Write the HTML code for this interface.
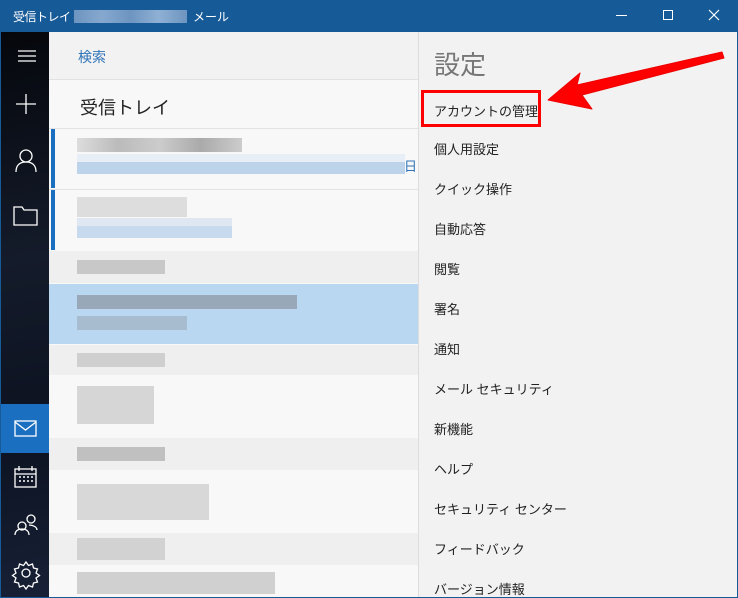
<!DOCTYPE html>
<html><head><meta charset="utf-8"><style>
*{margin:0;padding:0;box-sizing:border-box}
html,body{width:738px;height:598px;overflow:hidden}
body{font-family:"Liberation Sans","Noto Sans CJK JP",sans-serif;background:#fff;position:relative}
.a{position:absolute}
.px{position:absolute;height:14px}
</style></head><body>
<div class="a" style="left:0;top:0;width:738px;height:32px;background:#175a98"></div>
<div class="a" style="left:13px;top:8px;color:#fff;font-size:12px;letter-spacing:-0.5px">受信トレイ -</div>
<div class="a" style="left:74px;top:10px;width:113px;height:13px;background:linear-gradient(90deg,#6d95c0,#86a8cf,#6d95c0,#8fb0d4,#6d95c0)"></div>
<div class="a" style="left:193px;top:8px;color:#fff;font-size:12px">メール</div>
<div class="a" style="left:616px;top:15px;width:11px;height:1px;background:#fff"></div>
<div class="a" style="left:663px;top:10px;width:10px;height:10px;border:1px solid #fff"></div>
<svg class="a" style="left:708px;top:9px" width="12" height="12"><path d="M1 1L11 11M11 1L1 11" stroke="#fff" stroke-width="1.2"/></svg>
<div class="a" style="left:0;top:32px;width:1px;height:566px;background:#175a98"></div>
<div class="a" style="left:737px;top:32px;width:1px;height:566px;background:#175a98"></div>
<!-- sidebar -->
<div class="a" style="left:1px;top:32px;width:48px;height:566px;background:linear-gradient(170deg,#05070c,#141b2a 40%,#0c1220 70%,#172036)"></div>
<svg class="a" style="left:1px;top:32px" width="48" height="565" fill="none" stroke="#fff" stroke-width="1.3">
<path d="M17 19h18M17 24h18M17 29h18"/>
<path d="M25 62v20M15 72h20"/>
<circle cx="25" cy="124" r="6"/><path d="M15 140c0-7 4-10 10-10s10 3 10 10"/>
<path d="M13 175h8l2 3h13v15H13z"/>
</svg>
<div class="a" style="left:1px;top:404px;width:48px;height:49px;background:#1a6fc0"></div>
<svg class="a" style="left:1px;top:380px" width="48" height="217" fill="none" stroke="#fff" stroke-width="1.3">
<rect x="14" y="41" width="21" height="15"/><path d="M14 42l10.5 8 10.5-8"/>
<rect x="14" y="89" width="21" height="18"/><path d="M14 94h21M18 86v5M31 86v5"/>
<path d="M18 97h2M22 97h2M26 97h2M30 97h2M18 101h2M22 101h2M26 101h2M30 101h2" stroke-width="1.5"/>
<circle cx="21" cy="146" r="4"/><path d="M14 155c0-4 3-6 7-6s7 2 7 6"/>
<circle cx="30" cy="139" r="4"/><path d="M28 145c4 0 8 2 8 5"/>
<circle cx="25" cy="193" r="4"/>
<path d="M25 182l2.5 3.5 4-1.5 1 4 4 1-1.5 4 3.5 2.5-3.5 2.5 1.5 4-4 1-1 4-4-1.5-2.5 3.5-2.5-3.5-4 1.5-1-4-4-1 1.5-4-3.5-2.5 3.5-2.5-1.5-4 4-1 1-4 4 1.5z"/>
</svg>
<!-- list -->
<div class="a" style="left:49px;top:32px;width:369px;height:566px;background:#f8f8f8"></div>
<div class="a" style="left:49px;top:32px;width:369px;height:48px;background:#f2f2f2;border-bottom:1px solid #e2e2e2"></div>
<div class="a" style="left:78px;top:47px;color:#2e73b8;font-size:14px">検索</div>
<div class="a" style="left:80px;top:94px;color:#222;font-size:18px">受信トレイ</div>
<div class="a" style="left:49px;top:128px;width:369px;height:1px;background:#e2e2e2"></div>
<div class="a" style="left:51px;top:129px;width:4px;height:59px;background:#1a6fc0"></div>
<div class="px" style="left:77px;top:138px;width:165px;background:linear-gradient(90deg,#ddd,#bbb,#ccc,#aaa,#ccc)"></div>
<div class="px" style="left:77px;top:154px;width:328px;height:20px;background:linear-gradient(180deg,#e8eef6 40%,#bcd3ea 40%)"></div>
<div class="a" style="left:404px;top:156px;color:#2e73b8;font-size:13px">日</div>
<div class="a" style="left:49px;top:189px;width:369px;height:1px;background:#e2e2e2"></div>
<div class="a" style="left:51px;top:190px;width:4px;height:60px;background:#1a6fc0"></div>
<div class="px" style="left:77px;top:197px;width:110px;height:20px;background:#ddd"></div>
<div class="px" style="left:77px;top:218px;width:155px;height:20px;background:linear-gradient(180deg,#dfe8f2 40%,#c8daee 40%)"></div>
<div class="a" style="left:49px;top:251px;width:369px;height:32px;background:#efefef"></div>
<div class="px" style="left:77px;top:260px;width:88px;background:#c8c8c8"></div>
<div class="a" style="left:49px;top:284px;width:369px;height:60px;background:#b9d7f1"></div>
<div class="px" style="left:77px;top:295px;width:220px;background:#98a8b8"></div>
<div class="px" style="left:77px;top:316px;width:110px;background:#a8bcd0"></div>
<div class="a" style="left:49px;top:345px;width:369px;height:30px;background:#efefef"></div>
<div class="px" style="left:77px;top:353px;width:88px;background:#cfcfcf"></div>
<div class="px" style="left:77px;top:386px;width:77px;height:38px;background:#d6d6d6"></div>
<div class="a" style="left:49px;top:438px;width:369px;height:32px;background:#efefef"></div>
<div class="px" style="left:77px;top:447px;width:88px;background:#c0c0c0"></div>
<div class="px" style="left:77px;top:484px;width:132px;height:36px;background:#d8d8d8"></div>
<div class="a" style="left:49px;top:533px;width:369px;height:32px;background:#efefef"></div>
<div class="px" style="left:77px;top:538px;width:88px;height:22px;background:#d2d2d2"></div>
<div class="px" style="left:77px;top:572px;width:198px;height:22px;background:#d0d0d0"></div>
<!-- settings -->
<div class="a" style="left:418px;top:32px;width:319px;height:566px;background:#f2f2f2;border-left:1px solid #ddd"></div>
<div class="a" style="left:434px;top:45px;font-size:26px;color:#777">設定</div>
<div class="a" style="left:434px;top:101px;font-size:13px;color:#222">アカウントの管理</div>
<div class="a" style="left:421px;top:90px;width:120px;height:37px;border:3px solid #f00"></div>
<div class="a" style="left:434px;top:130px;font-size:13px;color:#222;line-height:40px">個人用設定<br>クイック操作<br>自動応答<br>閲覧<br>署名<br>通知<br>メール セキュリティ<br>新機能<br>ヘルプ<br>セキュリティ センター<br>フィードバック<br>バージョン情報</div>
<div class="a" style="left:0;top:597px;width:738px;height:1px;background:#175a98"></div>
<svg class="a" style="left:540px;top:45px" width="190" height="75"><path d="M8 55L40 28L37 40L182 7L184 13L42 50L52 64Z" fill="#f00" stroke="#e00" stroke-linejoin="round"/></svg>
</body></html>
